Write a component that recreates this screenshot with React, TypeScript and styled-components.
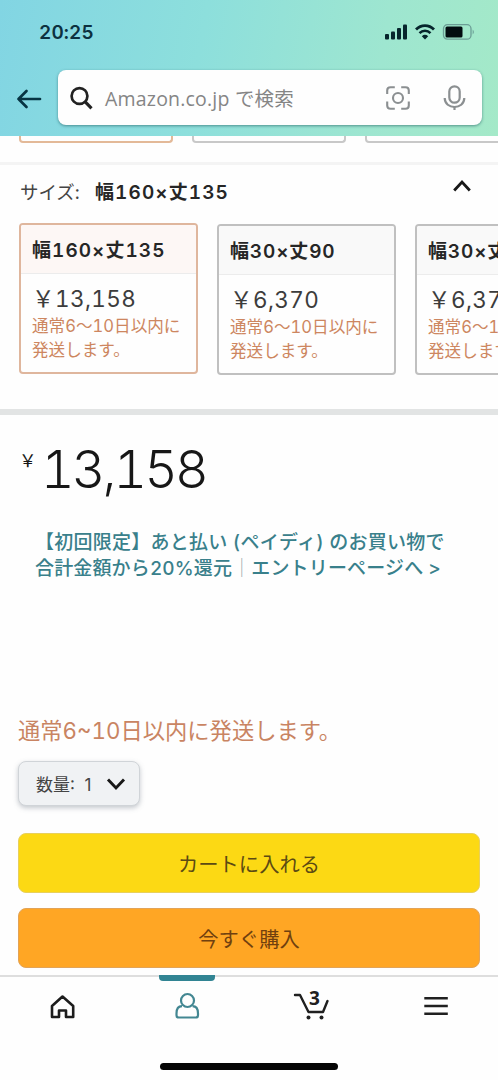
import React from 'react';
import styled, { createGlobalStyle } from 'styled-components';

const sans = `Inter, "Liberation Sans", "Noto Sans CJK JP", sans-serif`;

const GlobalStyle = createGlobalStyle`
  * { box-sizing: border-box; }
  body { margin: 0; background: #fefefe; font-family: ${sans}; font-variant-numeric: tabular-nums; color: #222; overflow: hidden; }
  button { font-family: inherit; margin: 0; padding: 0; border: 0; background: none; color: inherit; }
  svg { display: block; flex: none; }
`;

const Screen = styled.div`
  width: 498px;
  height: 1080px;
  display: flex;
  flex-direction: column;
  overflow: hidden;
  background: #fefefe;
`;

const Header = styled.header`
  flex: none;
  height: 136px;
  background: linear-gradient(100deg, #82d5e3 0%, #8ddfdc 40%, #9ee6d0 75%, #a4e9c8 100%);
`;

const StatusBar = styled.div`
  height: 70px;
  padding: 19px 22px 0 39px;
  display: flex;
  justify-content: space-between;
  align-items: flex-start;
`;

const Clock = styled.span`
  font-size: 19px;
  line-height: 27px;
  font-weight: 600;
  letter-spacing: 0.1px;
  color: #0c3140;
`;

const StatusIcons = styled.div`
  display: flex;
  align-items: center;
  gap: 7px;
  height: 26px;
`;

const SearchRow = styled.div`
  display: flex;
  align-items: center;
  padding: 0 16px 0 16px;
  gap: 16px;
`;

const SearchBox = styled.div`
  flex: 1;
  height: 55px;
  border-radius: 8px;
  background: #fefefe;
  box-shadow: 0 1px 3px rgba(30, 90, 95, 0.6);
  display: flex;
  align-items: center;
  padding: 0 15px 0 12px;
`;

const Placeholder = styled.span`
  flex: 1;
  margin-left: 11px;
  font-family: "Open Sans", "Noto Sans CJK JP", sans-serif;
  font-size: 19.5px;
  line-height: 28px;
  letter-spacing: 0.2px;
  color: #858585;
  white-space: nowrap;
  padding-top: 3px;
`;

const SearchTools = styled.div`
  display: flex;
  align-items: center;
  gap: 33px;
`;

const CutStrip = styled.div`
  flex: none;
  height: 26px;
  display: flex;
  gap: 19px;
  padding-left: 19px;
  overflow: hidden;
`;

const CutCard = styled.div<{ $active?: boolean }>`
  flex: none;
  width: 154px;
  height: 7px;
  border: 2px solid ${p => (p.$active ? '#e3b998' : '#c8c8c8')};
  border-top: 0;
  border-radius: 0 0 4px 4px;
`;

const Rule = styled.div<{ $thick?: boolean }>`
  flex: none;
  height: ${p => (p.$thick ? 6 : 3)}px;
  background: ${p => (p.$thick ? '#e2e4e4' : '#f4f4f4')};
`;

const SizeHeader = styled.div`
  flex: none;
  height: 58px;
  padding: 12px 26px 0 20px;
  display: flex;
  align-items: flex-start;
`;

const SizeLabel = styled.span`
  width: 75px;
  font-size: 18.5px;
  line-height: 30px;
  letter-spacing: -0.1px;
  color: #444;
  white-space: nowrap;
`;

const SizeValue = styled.span`
  flex: 1;
  font-size: 19px;
  line-height: 31px;
  font-weight: 600;
  letter-spacing: 1.1px;
  color: #262626;
`;

const ChevronButton = styled.button`
  padding-top: 2px;
`;

const Cards = styled.div`
  flex: none;
  height: 186px;
  display: flex;
  align-items: flex-start;
  gap: 19px;
  padding-left: 19px;
  overflow: hidden;
`;

const Card = styled.div<{ $active?: boolean }>`
  flex: none;
  width: 179px;
  height: 151px;
  margin-top: ${p => (p.$active ? 0 : 1)}px;
  border: 2px solid ${p => (p.$active ? '#dfb69d' : '#c0c0c0')};
  border-radius: 4px;
  overflow: hidden;
`;

const CardTitle = styled.div<{ $active?: boolean }>`
  height: 49px;
  padding-left: 11px;
  background: ${p => (p.$active ? '#fdf7f5' : '#f9f9f9')};
  border-bottom: 1px solid #ececec;
  font-size: 19px;
  line-height: 51px;
  font-weight: 600;
  letter-spacing: ${p => (p.$active ? 1.05 : 0.85)}px;
  color: #262626;
  white-space: nowrap;
`;

const CardPrice = styled.div`
  padding: 10px 0 0 11px;
  font-size: 22.5px;
  line-height: 30px;
  letter-spacing: 0.4px;
  color: #3c3c3c;
  white-space: nowrap;
`;

const CardShipping = styled.div`
  padding: 1px 0 0 11px;
  font-size: 16.6px;
  line-height: 23.5px;
  color: #cd8660;
  white-space: nowrap;
`;

const Price = styled.div`
  flex: none;
  height: 105px;
  padding: 22px 0 0 19px;
  display: flex;
  align-items: flex-start;
  color: #171717;
`;

const Yen = styled.span`
  width: 22px;
  padding-top: 11px;
  font-family: "Noto Sans CJK JP", sans-serif;
  font-size: 17.5px;
  line-height: 24px;
`;

const Amount = styled.span`
  font-size: 52px;
  line-height: 65px;
  font-weight: 300;
  letter-spacing: -2.9px;
`;

const Promo = styled.div`
  flex: none;
  height: 194px;
  padding: 10px 0 0 35px;
  display: flex;
  flex-direction: column;
  font-size: 19px;
  line-height: 26px;
  font-weight: 500;
  color: #39808b;
  white-space: nowrap;
`;

const PromoLine = styled.span<{ $spacing: number }>`
  letter-spacing: ${p => p.$spacing}px;
`;

const Divider = styled.span`
  font-weight: 300;
  color: #9aa5a8;
`;

const Shipping = styled.div`
  flex: none;
  height: 47px;
  padding-left: 18px;
  font-size: 22.3px;
  line-height: 34px;
  color: #c98462;
  white-space: nowrap;
`;

const Quantity = styled.button`
  flex: none;
  width: 122px;
  height: 45px;
  margin-left: 18px;
  padding: 0 13px 0 17px;
  display: flex;
  align-items: center;
  justify-content: space-between;
  border: 1px solid #d0d4d8;
  border-radius: 8px;
  background: #f0f2f4;
  box-shadow: 0 2px 5px rgba(90, 100, 115, 0.35);
  font-size: 17px;
  color: #444;
`;

const Actions = styled.div`
  flex: none;
  height: 169px;
  padding: 27px 18px 0;
  display: flex;
  flex-direction: column;
  gap: 15px;
`;

const ActionButton = styled.button<{ $bg: string; $ink: string; $edge: string }>`
  height: 60px;
  padding-top: 3px;
  border-radius: 8px;
  border: 1px solid ${p => p.$edge};
  background: ${p => p.$bg};
  color: ${p => p.$ink};
  font-size: 20.3px;
  line-height: 55px;
  font-weight: 400;
`;

const Nav = styled.nav`
  flex: none;
  height: 105px;
  border-top: 2px solid #dedede;
  display: flex;
  flex-direction: column;
  align-items: center;
  background: #fefefe;
`;

const Tabs = styled.div`
  height: 86px;
  width: 498px;
  margin-top: -2px;
  display: grid;
  grid-template-columns: repeat(4, 124.5px);
`;

const Tab = styled.div`
  display: flex;
  flex-direction: column;
  align-items: center;
`;

const Marker = styled.div<{ $active?: boolean }>`
  width: 56px;
  height: 6px;
  margin-bottom: 5px;
  border-radius: 0 0 4px 4px;
  background: ${p => (p.$active ? '#318493' : 'transparent')};
`;

const HomeBar = styled.div`
  width: 178px;
  height: 7px;
  margin-top: 2px;
  border-radius: 4px;
  background: #050505;
`;

const options = [
  { name: '幅160×丈135', price: '13,158', active: true },
  { name: '幅30×丈90', price: '6,370' },
  { name: '幅30×丈135', price: '6,370' },
];

const Signal = () => (
  <svg width="24" height="16" viewBox="0 0 24 16" fill="#06252c">
    <rect x="1" y="10" width="4" height="5.500" rx="1" />
    <rect x="7" y="7.500" width="4" height="8" rx="1" />
    <rect x="13" y="4" width="4" height="11.500" rx="1" />
    <rect x="19" y="0.500" width="4" height="15" rx="1" />
  </svg>
);

const Wifi = () => (
  <svg width="20" height="16" viewBox="0 0 20 16" fill="none" stroke="#06252c">
    <path d="M1 5.500C6 0.200 14 0.200 19 5.500" strokeWidth="2.800" />
    <path d="M4.500 9.200C7.600 6 12.400 6 15.500 9.200" strokeWidth="2.500" />
    <path d="M10 15.500L6.800 12.200Q10 9.400 13.200 12.200Z" fill="#06252c" stroke="none" />
  </svg>
);

const Battery = () => (
  <svg width="34" height="18" viewBox="0 0 34 18">
    <rect x="1.500" y="1.700" width="27.500" height="14.500" rx="4" fill="none" stroke="#6b9d95" strokeWidth="1.300" />
    <rect x="3.500" y="3.500" width="17" height="11" rx="1.500" fill="#020c10" />
    <path d="M30.700 6.500Q33 9 30.700 11.500Z" fill="#6b9d95" />
  </svg>
);

const BackArrow = () => (
  <svg width="26" height="22" viewBox="0 0 26 22" fill="none" stroke="#073443" strokeWidth="2.700" strokeLinecap="round" strokeLinejoin="round">
    <path d="M24 12H2.500M10.500 4L2.500 12L10.500 20" />
  </svg>
);

const Magnifier = () => (
  <svg width="24" height="24" viewBox="0 0 24 24" fill="none" stroke="#222" strokeWidth="2.700">
    <circle cx="9.500" cy="10" r="7.900" />
    <path d="M15 15.600L21.500 22.300" strokeWidth="3.200" />
  </svg>
);

const Lens = () => (
  <svg width="24" height="24" viewBox="0 0 24 24" fill="none" stroke="#8b8f91" strokeWidth="2.100">
    <path d="M1.200 8V4.500Q1.200 1.200 4.500 1.200H8.800M15.200 1.200H19.500Q22.800 1.200 22.800 4.500V8M22.800 15.500V19.500Q22.800 22.800 19.500 22.800H15.200M8.800 22.800H4.500Q1.200 22.800 1.200 19.500V15.500" />
    <circle cx="12" cy="12" r="5" />
  </svg>
);

const Mic = () => (
  <svg width="24" height="26" viewBox="0 0 24 26" fill="none" stroke="#8b8f91" strokeWidth="2.200">
    <rect x="6.300" y="1.300" width="10.400" height="16.400" rx="5.200" />
    <path d="M1.700 13C1.700 25 21.300 25 21.300 13" />
    <path d="M11.500 21.500V25" />
  </svg>
);

const Chevron = ({ up = false }: { up?: boolean }) => (
  <svg width="20" height="14" viewBox="0 0 20 14" fill="none" stroke="#181818" strokeWidth={up ? 2.8 : 2.9}>
    <path d={up ? 'M2.200 11.500L10 3L17.800 11.500' : 'M2 2.500L10 11L18 2.500'} />
  </svg>
);

const HomeIcon = () => (
  <svg width="40" height="40" viewBox="0 0 40 40" fill="none" stroke="#1d1d1d" strokeWidth="2.600">
    <path d="M20.500 10.500L10 20V31H17V24.500H24V31H31.200V20Z" strokeLinejoin="round" />
  </svg>
);

const PersonIcon = () => (
  <svg width="40" height="40" viewBox="0 0 40 40" fill="none" stroke="#438792" strokeWidth="2.200">
    <circle cx="20.500" cy="14.500" r="6.500" />
    <path d="M15 20.200C11 20.200 9.500 23 9.500 27.500V29.300Q9.500 31.500 11.700 31.500H28.800Q31 31.500 31 29.300V27.500C31 23 29.500 20.200 25.500 20.200" />
  </svg>
);

const CartIcon = () => (
  <svg width="40" height="40" viewBox="0 0 40 40" fill="none" stroke="#202020" strokeWidth="2.400" strokeLinecap="round">
    <path d="M4 9H9L17.500 26H32L36.500 15" strokeLinejoin="round" />
    <circle cx="17.500" cy="31.500" r="2" fill="#202020" stroke="none" />
    <circle cx="30.500" cy="31.500" r="2" fill="#202020" stroke="none" />
    <text x="23.500" y="18.500" textAnchor="middle" fontFamily="Open Sans" fontSize="19" fontWeight="700" fill="#202020" stroke="none">3</text>
  </svg>
);

const MenuIcon = () => (
  <svg width="40" height="40" viewBox="0 0 40 40" fill="none" stroke="#202020" strokeWidth="2.600">
    <path d="M8.300 12.300H31.800M8.300 20H31.800M8.300 27.700H31.800" />
  </svg>
);

export default function App() {
  return (
    <Screen>
      <GlobalStyle />
      <Header>
        <StatusBar>
          <Clock>20:25</Clock>
          <StatusIcons><Signal /><Wifi /><Battery /></StatusIcons>
        </StatusBar>
        <SearchRow>
          <BackArrow />
          <SearchBox>
            <Magnifier />
            <Placeholder>Amazon.co.jp で検索</Placeholder>
            <SearchTools><Lens /><Mic /></SearchTools>
          </SearchBox>
        </SearchRow>
      </Header>

      <CutStrip><CutCard $active /><CutCard /><CutCard /></CutStrip>
      <Rule />
      <SizeHeader>
        <SizeLabel>サイズ:</SizeLabel>
        <SizeValue>幅160×丈135</SizeValue>
        <ChevronButton><Chevron up /></ChevronButton>
      </SizeHeader>
      <Cards>
        {options.map(option => (
          <Card key={option.name} $active={option.active}>
            <CardTitle $active={option.active}>{option.name}</CardTitle>
            <CardPrice>￥{option.price}</CardPrice>
            <CardShipping>通常6〜10日以内に<br />発送します。</CardShipping>
          </Card>
        ))}
      </Cards>
      <Rule $thick />

      <Price><Yen>￥</Yen><Amount>13,158</Amount></Price>
      <Promo>
        <PromoLine $spacing={0.25}>【初回限定】あと払い (ペイディ) のお買い物で</PromoLine>
        <PromoLine $spacing={0.15}>合計金額から20%還元<Divider>｜</Divider>エントリーページへ &gt;</PromoLine>
      </Promo>
      <Shipping>通常6~10日以内に発送します。</Shipping>
      <Quantity><span>数量:&nbsp; 1</span><Chevron /></Quantity>
      <Actions>
        <ActionButton $bg="#fcd914" $ink="#5b4a13" $edge="#e8d05c">カートに入れる</ActionButton>
        <ActionButton $bg="#ffa624" $ink="#70400f" $edge="#e2a357">今すぐ購入</ActionButton>
      </Actions>

      <Nav>
        <Tabs>
          <Tab><Marker /><HomeIcon /></Tab>
          <Tab><Marker $active /><PersonIcon /></Tab>
          <Tab><Marker /><CartIcon /></Tab>
          <Tab><Marker /><MenuIcon /></Tab>
        </Tabs>
        <HomeBar />
      </Nav>
    </Screen>
  );
}
